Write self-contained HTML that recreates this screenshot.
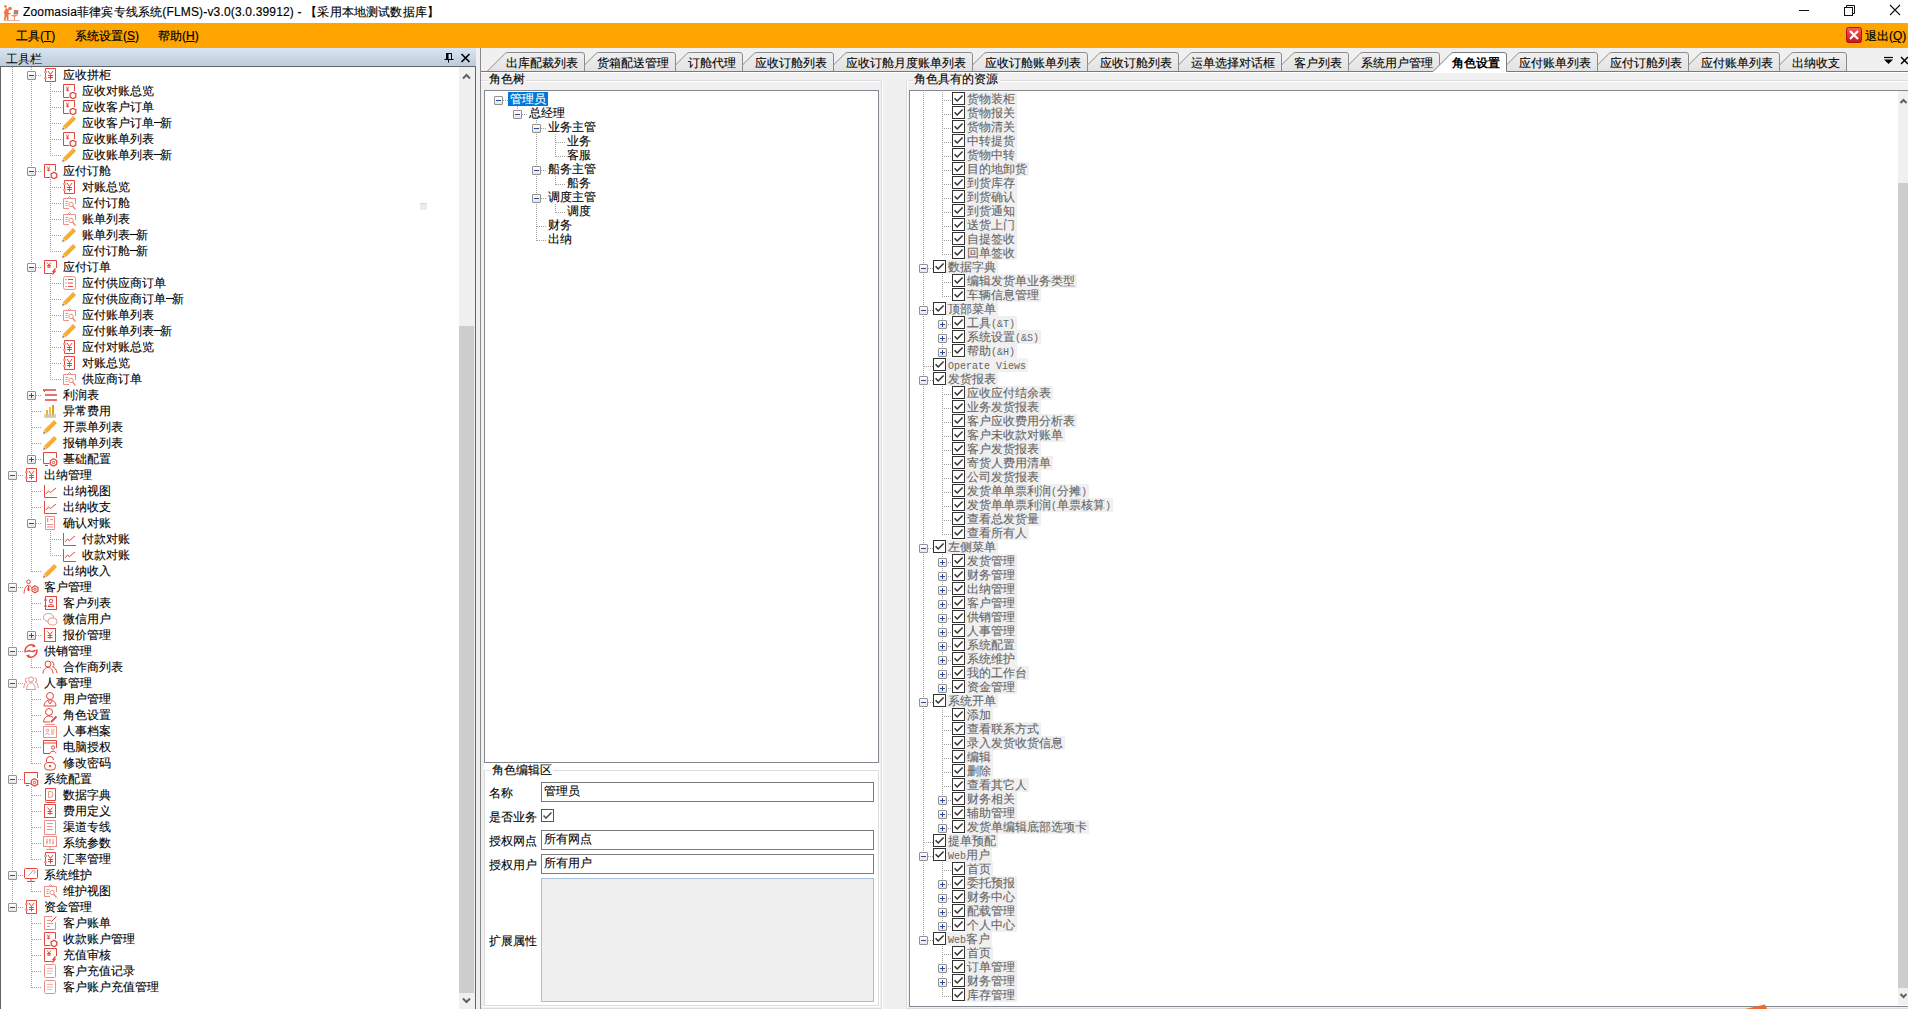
<!DOCTYPE html><html><head><meta charset="utf-8"><title>FLMS</title><style>
*{box-sizing:border-box}
body{margin:0;width:1908px;height:1009px;overflow:hidden;position:relative;background:#f0f0f0;font-family:"Liberation Sans",sans-serif;font-size:12px;color:#000}
.a{position:absolute;white-space:nowrap}
.t{position:absolute;white-space:nowrap;line-height:16px;height:16px;-webkit-text-stroke:.1px currentColor}
.vd{position:absolute;width:1px;background:repeating-linear-gradient(to bottom,#a0a0a0 0 1px,transparent 1px 2px)}
.hd{position:absolute;height:1px;background:repeating-linear-gradient(to right,#a0a0a0 0 1px,transparent 1px 2px)}
.bx{position:absolute;width:9px;height:9px;border:1px solid #919191;border-radius:1px;background:linear-gradient(#fff,#e6e6e6)}
.bx:before{content:"";position:absolute;left:1px;top:3px;width:5px;height:1px;background:#2d4a9a}
.bx.p:after{content:"";position:absolute;left:3px;top:1px;width:1px;height:5px;background:#2d4a9a}
.cb{position:absolute;width:13px;height:13px;border:1px solid #333;background:#fff}
.rt{position:absolute;white-space:nowrap;line-height:14px;height:14px;color:#666;background:#f0f0f0;padding:0 2px;-webkit-text-stroke:.1px currentColor}
.m{font-family:"Liberation Mono",monospace;font-size:10px;-webkit-text-stroke:0}
.dash{display:inline-block;width:6px;height:1px;background:#000;vertical-align:middle;position:relative;top:-1px;box-shadow:2px 0 0 #000}
svg{position:absolute;overflow:visible}
</style></head><body><svg width="0" height="0" style="position:absolute"><defs><symbol id="i-yen" viewBox="0 0 16 16"><path d="M3.5 1.5 H13.5 V14.5 H3.5" fill="none" stroke="#e2463c"/><path d="M3.5 1.5 V4 M3.5 6 V10 M3.5 12 V14.5 M2 5 H5 M2 11 H5" stroke="#e2463c"/><path d="M6 4 L8.5 7.5 L11 4 M8.5 7.5 V12.5 M6 8.5 H11 M6 10.5 H11" fill="none" stroke="#e2463c"/></symbol><symbol id="i-yengear" viewBox="0 0 16 16"><path d="M8 14.5 H2.5 V1.5 H13.5 V8" fill="none" stroke="#e2463c"/><path d="M5 3.5 L6.5 5.5 L8 3.5 M6.5 5.5 V8.5 M5 6 H8 M5 7.5 H8" fill="none" stroke="#e2463c" stroke-width=".8"/><path d="M12 9.3 L14.8 10.9 V14.1 L12 15.7 L9.2 14.1 V10.9 Z" fill="none" stroke="#e2463c" stroke-width="1.3"/></symbol><symbol id="i-pencil" viewBox="0 0 16 16"><defs><linearGradient id="pg" x1="0" y1="0" x2="1" y2="1"><stop offset="0" stop-color="#ffd25a"/><stop offset="1" stop-color="#f08a00"/></linearGradient></defs><path d="M12 1.5 L14.5 4 L5 13.5 L1.5 14.5 L2.5 11 Z" fill="url(#pg)" stroke="#e48c10" stroke-width=".6"/><path d="M1.5 14.5 L2.5 11 L5 13.5 Z" fill="#f0c8a0"/><path d="M1.5 14.5 L2 13 L3 14 Z" fill="#444"/></symbol><symbol id="i-search" viewBox="0 0 16 16"><g fill="none" stroke="#eb8f88"><path d="M2.5 3.5 H14.5 V9 M2.5 3.5 V13.5 H8"/><path d="M6.5 3.5 L8.5 1.5 L10.5 3.5"/><path d="M4.5 6.5 H7.5 M4.5 8.5 H6.5 M4.5 10.5 H6.5"/><circle cx="10" cy="9.5" r="2.2"/><path d="M11.5 11 L14.5 14.5" stroke-width="1.5"/></g></symbol><symbol id="i-chart" viewBox="0 0 16 16"><g fill="none" stroke="#e2463c"><path d="M2.5 2 V14.5 H15"/><path d="M4 11 L6.5 8 L8.5 9.5 L14 5"/></g></symbol><symbol id="i-list" viewBox="0 0 16 16"><g fill="none" stroke="#eb8f88"><rect x="2.5" y="1.5" width="12" height="13" rx="2"/><path d="M7 4.5 H12 M7 8 H12 M7 11.5 H12 M4.5 4.5 H5.5 M4.5 8 H5.5 M4.5 11.5 H5.5" stroke="#e2463c"/></g></symbol><symbol id="i-bars" viewBox="0 0 16 16"><g><rect x="4" y="7" width="2" height="7" fill="#f0b020"/><rect x="7" y="4" width="2" height="10" fill="#f7c23a"/><rect x="10" y="2" width="2" height="12" fill="#e8a010"/><rect x="2" y="11" width="12" height="4" fill="#c8c8b8" opacity=".8"/></g></symbol><symbol id="i-lines" viewBox="0 0 16 16"><g stroke="#e2463c" stroke-width="1.6"><path d="M1 3 H14 M3 8 H15 M3 13 H15"/><path d="M1 3 L3 5" stroke-width="1"/></g></symbol><symbol id="i-mongear" viewBox="0 0 16 16"><g fill="none" stroke="#e2463c"><path d="M7.5 12.5 H1.5 V1.5 H14.5 V7"/><path d="M3 14.5 H6"/><path d="M11.5 7.8 L14.7 9.6 V13.3 L11.5 15.1 L8.3 13.3 V9.6 Z" stroke-width="1.2"/><circle cx="11.5" cy="11.5" r="1.2"/></g></symbol><symbol id="i-docs" viewBox="0 0 16 16"><g fill="none" stroke="#eb8f88"><path d="M3.5 1.5 H12.5 V14.5 H3.5 Z"/><path d="M5.5 3 V7 M5 4 H6.5 M5 6 H6.5 M8 4.5 H11 M5 9.5 H11 M5 12 H11"/></g></symbol><symbol id="i-usergear" viewBox="0 0 16 16"><g fill="none" stroke="#e2463c"><circle cx="5.5" cy="2.8" r="1.8"/><path d="M1 14.5 C1.5 8.5 3.5 6.5 5.5 6.5 C7 6.5 8 7.5 8.5 8.5"/><path d="M5.5 7 L4.8 11 L5.5 12 L6.2 11 Z" fill="#e2463c"/><path d="M12 6.8 L15 8.5 V12 L12 13.7 L9 12 V8.5 Z" stroke-width="1.2"/><circle cx="12" cy="10.2" r="1.2"/></g></symbol><symbol id="i-contact" viewBox="0 0 16 16"><g fill="none" stroke="#e2463c"><rect x="3.5" y="1.5" width="11" height="13"/><path d="M2 5 H5 M2 11 H5"/><circle cx="9" cy="6" r="1.8"/><path d="M6 11.5 C6.5 9 11.5 9 12 11.5 Z"/></g></symbol><symbol id="i-wechat" viewBox="0 0 16 16"><g fill="none" stroke="#eb8f88"><ellipse cx="6.5" cy="6.5" rx="5" ry="4"/><ellipse cx="10.5" cy="10.5" rx="4.5" ry="3.5" fill="#fff"/></g></symbol><symbol id="i-yenbox" viewBox="0 0 16 16"><g fill="none" stroke="#e2463c"><rect x="2.5" y="1.5" width="11" height="13"/><path d="M5.5 4.5 L8 7.5 L10.5 4.5 M8 7.5 V12 M5.5 8.5 H10.5 M5.5 10.5 H10.5"/></g></symbol><symbol id="i-cycle" viewBox="0 0 16 16"><g fill="none" stroke="#e2463c" stroke-width="1.5"><path d="M2.3 9.5 A6 6 0 0 1 11 2.7"/><path d="M13.7 6.5 A6 6 0 0 1 5 13.3"/><path d="M3.5 9 C5.5 5.5 9.5 11 12.5 7"/></g><path d="M10 1 L13 3.5 L9.5 4.5 Z M6 15 L3 12.5 L6.5 11.5 Z" fill="#e2463c"/></symbol><symbol id="i-users" viewBox="0 0 16 16"><g fill="none" stroke="#e2463c"><circle cx="6" cy="5" r="3"/><path d="M1 14.5 C1.5 10 3.5 8.5 6 8.5 C8.5 8.5 10.5 10 11 14.5"/><path d="M9.5 2.5 A3 3 0 0 1 10.5 8 C13 8.5 14.5 10.5 15 14"/></g></symbol><symbol id="i-users3" viewBox="0 0 16 16"><g fill="none" stroke="#eb8f88"><circle cx="8" cy="4.5" r="2.5"/><path d="M3.5 14.5 C4 9.5 6 8 8 8 C10 8 12 9.5 12.5 14.5 Z"/><path d="M4.5 3 A2 2 0 0 0 4 7 C2 7.5 1 9.5 .8 13 M11.5 3 A2 2 0 0 1 12 7 C14 7.5 15 9.5 15.2 13"/></g></symbol><symbol id="i-user" viewBox="0 0 16 16"><g fill="none" stroke="#e2463c"><circle cx="8" cy="5" r="3.5"/><path d="M2 15 C2.5 10.5 5 9 8 9 C11 9 13.5 10.5 14 15 Z"/><path d="M6 10 L8 13 L10 10"/></g></symbol><symbol id="i-useredit" viewBox="0 0 16 16"><g fill="none" stroke="#e2463c"><circle cx="7" cy="5" r="3.5"/><path d="M1.5 15 C2 10.5 4.5 9 7 9 C8.5 9 10 9.5 11 10.5 M1.5 15 H8"/><path d="M9 15 L14.5 9.5" stroke-width="1.8"/></g></symbol><symbol id="i-idcard" viewBox="0 0 16 16"><g fill="none" stroke="#eb8f88"><rect x="1.5" y="3.5" width="13" height="11"/><path d="M3 1.5 H13"/><circle cx="5.5" cy="7.5" r="1.3"/><path d="M3.5 12 C4 10 7 10 7.5 12 M9 7 H12.5 M9 9 H12.5 M9 11 H12"/></g></symbol><symbol id="i-pcuser" viewBox="0 0 16 16"><g fill="none" stroke="#e2463c"><path d="M8 14.5 H1.5 V1.5 H14.5 V9 M1.5 4 H14.5"/><circle cx="11" cy="8.5" r="1.6"/><path d="M8 14.5 C8.5 11.5 13.5 11.5 14 14.5"/></g></symbol><symbol id="i-lock" viewBox="0 0 16 16"><g fill="none" stroke="#e2463c"><path d="M4.5 7 V5 A3.5 3.5 0 0 1 11.5 5"/><rect x="2.5" y="7.5" width="11" height="7.5" rx="3.5"/><circle cx="8" cy="11" r=".8" fill="#e2463c"/></g></symbol><symbol id="i-docD" viewBox="0 0 16 16"><g fill="none" stroke="#e2463c"><path d="M3.5 13.5 V1.5 H13.5 V13.5 H4.5 A1 1 0 0 0 4.5 15.5 H13.5"/><path d="M6.5 4.5 H8.5 A2.5 3 0 0 1 8.5 10.5 H6.5 Z" stroke="#eb8f88"/></g></symbol><symbol id="i-doclines" viewBox="0 0 16 16"><g fill="none" stroke="#eb8f88"><path d="M2.5 1.5 H13.5 V15.5 H2.5 Z"/><path d="M5 4.5 H11 M5 7.5 H10 M5 10.5 H11"/></g></symbol><symbol id="i-monparam" viewBox="0 0 16 16"><g fill="none" stroke="#eb8f88"><rect x="1.5" y="1.5" width="13" height="10"/><path d="M8 11.5 V14 M4 14.5 H12 M5 4 V9 M8 4 V9 M11 4 V9 M4 7 H6 M7 5 H9 M10 8 H12"/></g></symbol><symbol id="i-monwrench" viewBox="0 0 16 16"><g fill="none" stroke="#e2463c"><rect x="1.5" y="1.5" width="13" height="10" rx="1"/><path d="M4 14.5 H12 M8 11.5 V14"/><path d="M5 9 L9 5 A1.5 1.5 0 1 1 10.5 6.5" stroke="#eb8f88"/></g></symbol><symbol id="i-docedit" viewBox="0 0 16 16"><g fill="none" stroke="#eb8f88"><path d="M13.5 7 V14.5 H2.5 V1.5 H10"/><path d="M5 5.5 H9 M5 8.5 H11 M5 11.5 H8"/><path d="M9 7 L14.5 1.5" stroke="#e2463c"/></g></symbol><symbol id="i-docfill" viewBox="0 0 16 16"><g><rect x="2.5" y="1.5" width="11" height="13" rx="1" fill="none" stroke="#eb8f88"/><path d="M5 5.5 H11 M5 8 H11 M5 10.5 H10" stroke="#e9b5b0"/></g></symbol><symbol id="i-yenbolt" viewBox="0 0 16 16"><g fill="none" stroke="#e2463c"><path d="M10 14.5 H2.5 V1.5 H14.5 V9"/><path d="M5 3.5 L7 6 L9 3.5 M7 6 V9 M5 6.5 H9 M5 8 H9" stroke-width=".9"/><path d="M13.5 9.5 L11 12.5 H13 L10.5 15.5" stroke-width="1.3"/></g></symbol><symbol id="i-chk" viewBox="0 0 13 13"><path d="M2.6 6.2 L5.2 9 L10.6 3.4" fill="none" stroke="#333" stroke-width="1.5"/></symbol></defs></svg><div class="a" style="left:0;top:0;width:1908px;height:23px;background:#fff"></div><svg style="left:2px;top:3px" width="17" height="17" viewBox="0 0 17 17">
<g fill="#ec7446">
<circle cx="3.5" cy="3.5" r="1.3"/><circle cx="8" cy="5.5" r="1.8"/>
<path d="M4 5 L7 6.5 L6.5 10 L9 10.5 L9 11.2 L6.5 11.2 L6.5 17 L5 17 L4.5 13 L3.5 17 L2 17 L2.5 12 L2 9 Z"/>
<path d="M8.5 12 H16 L13 14 V17.5 H12 V14 Z" opacity=".8"/>
<rect x="1.5" y="17" width="16" height="1" opacity=".6"/>
<path d="M12 7 H16.5 L16 11.5 H11.5 Z"/>
</g><path d="M12.4 8 H15.8 L15.4 11 H12 Z" fill="#4aa3df"/></svg><div class="a" style="left:23px;top:4px;line-height:16px;font-size:12px;letter-spacing:.17px;-webkit-text-stroke:.15px #000">Zoomasia菲律宾专线系统(FLMS)-v3.0(3.0.39912) - 【采用本地测试数据库】</div><svg style="left:1790px;top:0" width="118" height="22" viewBox="0 0 118 22">
<path d="M9 10.5 H19" stroke="#111" stroke-width="1"/>
<rect x="54.5" y="7.5" width="8" height="8" fill="none" stroke="#111"/>
<path d="M56.5 7.5 V5.5 H64.5 V13.5 H62.5" fill="none" stroke="#111"/>
<path d="M100 5 L110 15 M110 5 L100 15" stroke="#111" stroke-width="1.1"/></svg><div class="a" style="left:0;top:23px;width:1908px;height:25px;background:#ffa500"></div><div class="a" style="left:16px;top:28px;line-height:16px;font-size:12px;-webkit-text-stroke:.2px #000">工具(<u>T</u>)</div><div class="a" style="left:75px;top:28px;line-height:16px;font-size:12px;-webkit-text-stroke:.2px #000">系统设置(<u>S</u>)</div><div class="a" style="left:158px;top:28px;line-height:16px;font-size:12px;-webkit-text-stroke:.2px #000">帮助(<u>H</u>)</div><svg style="left:1846px;top:27px" width="16" height="16" viewBox="0 0 16 16">
<defs><linearGradient id="rg" x1="0" y1="0" x2="0" y2="1"><stop offset="0" stop-color="#f36060"/><stop offset="1" stop-color="#c81414"/></linearGradient></defs>
<rect x="0.5" y="0.5" width="15" height="15" rx="2" fill="url(#rg)" stroke="#b01010"/>
<path d="M4 4 L12 12 M12 4 L4 12" stroke="#fff" stroke-width="2.2"/></svg><div class="a" style="left:1865px;top:28px;line-height:16px;font-size:12px;-webkit-text-stroke:.2px #000">退出(<u>Q</u>)</div><div class="a" style="left:0;top:48px;width:476px;height:18px;background:linear-gradient(#d9e5f2,#bccadb)"></div><div class="a" style="left:6px;top:51px;line-height:16px">工具栏</div><svg style="left:440px;top:48px" width="36" height="18" viewBox="0 0 36 18">
<path d="M6.5 5.5 H11.5 V11.5 M4.5 11.5 H13.5 M8.5 11.5 V14.5" stroke="#000" stroke-width="1" fill="none"/>
<rect x="6" y="5" width="2.5" height="6.5" fill="#000"/>
<path d="M21.5 6 L29.5 14 M29.5 6 L21.5 14" stroke="#000" stroke-width="1.6"/></svg><div class="a" style="left:0;top:66px;width:476px;height:943px;background:#fff;border-left:1px solid #646464;border-top:1px solid #646464;border-right:1px solid #646464"></div><div class="a" style="left:1px;top:67px;width:458px;height:942px;overflow:hidden"><div class="a" style="left:-1px;top:-67px;width:476px;height:1009px"><div class="vd" style="left:12px;top:67px;height:16px"></div><div class="vd" style="left:31px;top:67px;height:16px"></div><div class="hd" style="left:32px;top:75px;width:10px"></div><div class="bx" style="left:27px;top:71px"></div><div class="vd" style="left:12px;top:83px;height:16px"></div><div class="vd" style="left:31px;top:83px;height:16px"></div><div class="vd" style="left:50px;top:83px;height:16px"></div><div class="hd" style="left:52px;top:91px;width:9px"></div><div class="vd" style="left:12px;top:99px;height:16px"></div><div class="vd" style="left:31px;top:99px;height:16px"></div><div class="vd" style="left:50px;top:99px;height:16px"></div><div class="hd" style="left:52px;top:107px;width:9px"></div><div class="vd" style="left:12px;top:115px;height:16px"></div><div class="vd" style="left:31px;top:115px;height:16px"></div><div class="vd" style="left:50px;top:115px;height:16px"></div><div class="hd" style="left:52px;top:123px;width:9px"></div><div class="vd" style="left:12px;top:131px;height:16px"></div><div class="vd" style="left:31px;top:131px;height:16px"></div><div class="vd" style="left:50px;top:131px;height:16px"></div><div class="hd" style="left:52px;top:139px;width:9px"></div><div class="vd" style="left:12px;top:147px;height:16px"></div><div class="vd" style="left:31px;top:147px;height:16px"></div><div class="vd" style="left:50px;top:147px;height:9px"></div><div class="hd" style="left:52px;top:155px;width:9px"></div><div class="vd" style="left:12px;top:163px;height:16px"></div><div class="vd" style="left:31px;top:163px;height:16px"></div><div class="hd" style="left:32px;top:171px;width:10px"></div><div class="bx" style="left:27px;top:167px"></div><div class="vd" style="left:12px;top:179px;height:16px"></div><div class="vd" style="left:31px;top:179px;height:16px"></div><div class="vd" style="left:50px;top:179px;height:16px"></div><div class="hd" style="left:52px;top:187px;width:9px"></div><div class="vd" style="left:12px;top:195px;height:16px"></div><div class="vd" style="left:31px;top:195px;height:16px"></div><div class="vd" style="left:50px;top:195px;height:16px"></div><div class="hd" style="left:52px;top:203px;width:9px"></div><div class="vd" style="left:12px;top:211px;height:16px"></div><div class="vd" style="left:31px;top:211px;height:16px"></div><div class="vd" style="left:50px;top:211px;height:16px"></div><div class="hd" style="left:52px;top:219px;width:9px"></div><div class="vd" style="left:12px;top:227px;height:16px"></div><div class="vd" style="left:31px;top:227px;height:16px"></div><div class="vd" style="left:50px;top:227px;height:16px"></div><div class="hd" style="left:52px;top:235px;width:9px"></div><div class="vd" style="left:12px;top:243px;height:16px"></div><div class="vd" style="left:31px;top:243px;height:16px"></div><div class="vd" style="left:50px;top:243px;height:9px"></div><div class="hd" style="left:52px;top:251px;width:9px"></div><div class="vd" style="left:12px;top:259px;height:16px"></div><div class="vd" style="left:31px;top:259px;height:16px"></div><div class="hd" style="left:32px;top:267px;width:10px"></div><div class="bx" style="left:27px;top:263px"></div><div class="vd" style="left:12px;top:275px;height:16px"></div><div class="vd" style="left:31px;top:275px;height:16px"></div><div class="vd" style="left:50px;top:275px;height:16px"></div><div class="hd" style="left:52px;top:283px;width:9px"></div><div class="vd" style="left:12px;top:291px;height:16px"></div><div class="vd" style="left:31px;top:291px;height:16px"></div><div class="vd" style="left:50px;top:291px;height:16px"></div><div class="hd" style="left:52px;top:299px;width:9px"></div><div class="vd" style="left:12px;top:307px;height:16px"></div><div class="vd" style="left:31px;top:307px;height:16px"></div><div class="vd" style="left:50px;top:307px;height:16px"></div><div class="hd" style="left:52px;top:315px;width:9px"></div><div class="vd" style="left:12px;top:323px;height:16px"></div><div class="vd" style="left:31px;top:323px;height:16px"></div><div class="vd" style="left:50px;top:323px;height:16px"></div><div class="hd" style="left:52px;top:331px;width:9px"></div><div class="vd" style="left:12px;top:339px;height:16px"></div><div class="vd" style="left:31px;top:339px;height:16px"></div><div class="vd" style="left:50px;top:339px;height:16px"></div><div class="hd" style="left:52px;top:347px;width:9px"></div><div class="vd" style="left:12px;top:355px;height:16px"></div><div class="vd" style="left:31px;top:355px;height:16px"></div><div class="vd" style="left:50px;top:355px;height:16px"></div><div class="hd" style="left:52px;top:363px;width:9px"></div><div class="vd" style="left:12px;top:371px;height:16px"></div><div class="vd" style="left:31px;top:371px;height:16px"></div><div class="vd" style="left:50px;top:371px;height:9px"></div><div class="hd" style="left:52px;top:379px;width:9px"></div><div class="vd" style="left:12px;top:387px;height:16px"></div><div class="vd" style="left:31px;top:387px;height:16px"></div><div class="hd" style="left:32px;top:395px;width:10px"></div><div class="bx p" style="left:27px;top:391px"></div><div class="vd" style="left:12px;top:403px;height:16px"></div><div class="vd" style="left:31px;top:403px;height:16px"></div><div class="hd" style="left:32px;top:411px;width:10px"></div><div class="vd" style="left:12px;top:419px;height:16px"></div><div class="vd" style="left:31px;top:419px;height:16px"></div><div class="hd" style="left:32px;top:427px;width:10px"></div><div class="vd" style="left:12px;top:435px;height:16px"></div><div class="vd" style="left:31px;top:435px;height:16px"></div><div class="hd" style="left:32px;top:443px;width:10px"></div><div class="vd" style="left:12px;top:451px;height:16px"></div><div class="vd" style="left:31px;top:451px;height:9px"></div><div class="hd" style="left:32px;top:459px;width:10px"></div><div class="bx p" style="left:27px;top:455px"></div><div class="vd" style="left:12px;top:467px;height:16px"></div><div class="hd" style="left:14px;top:475px;width:9px"></div><div class="bx" style="left:8px;top:471px"></div><div class="vd" style="left:12px;top:483px;height:16px"></div><div class="vd" style="left:31px;top:483px;height:16px"></div><div class="hd" style="left:32px;top:491px;width:10px"></div><div class="vd" style="left:12px;top:499px;height:16px"></div><div class="vd" style="left:31px;top:499px;height:16px"></div><div class="hd" style="left:32px;top:507px;width:10px"></div><div class="vd" style="left:12px;top:515px;height:16px"></div><div class="vd" style="left:31px;top:515px;height:16px"></div><div class="hd" style="left:32px;top:523px;width:10px"></div><div class="bx" style="left:27px;top:519px"></div><div class="vd" style="left:12px;top:531px;height:16px"></div><div class="vd" style="left:31px;top:531px;height:16px"></div><div class="vd" style="left:50px;top:531px;height:16px"></div><div class="hd" style="left:52px;top:539px;width:9px"></div><div class="vd" style="left:12px;top:547px;height:16px"></div><div class="vd" style="left:31px;top:547px;height:16px"></div><div class="vd" style="left:50px;top:547px;height:9px"></div><div class="hd" style="left:52px;top:555px;width:9px"></div><div class="vd" style="left:12px;top:563px;height:16px"></div><div class="vd" style="left:31px;top:563px;height:9px"></div><div class="hd" style="left:32px;top:571px;width:10px"></div><div class="vd" style="left:12px;top:579px;height:16px"></div><div class="hd" style="left:14px;top:587px;width:9px"></div><div class="bx" style="left:8px;top:583px"></div><div class="vd" style="left:12px;top:595px;height:16px"></div><div class="vd" style="left:31px;top:595px;height:16px"></div><div class="hd" style="left:32px;top:603px;width:10px"></div><div class="vd" style="left:12px;top:611px;height:16px"></div><div class="vd" style="left:31px;top:611px;height:16px"></div><div class="hd" style="left:32px;top:619px;width:10px"></div><div class="vd" style="left:12px;top:627px;height:16px"></div><div class="vd" style="left:31px;top:627px;height:9px"></div><div class="hd" style="left:32px;top:635px;width:10px"></div><div class="bx p" style="left:27px;top:631px"></div><div class="vd" style="left:12px;top:643px;height:16px"></div><div class="hd" style="left:14px;top:651px;width:9px"></div><div class="bx" style="left:8px;top:647px"></div><div class="vd" style="left:12px;top:659px;height:16px"></div><div class="vd" style="left:31px;top:659px;height:9px"></div><div class="hd" style="left:32px;top:667px;width:10px"></div><div class="vd" style="left:12px;top:675px;height:16px"></div><div class="hd" style="left:14px;top:683px;width:9px"></div><div class="bx" style="left:8px;top:679px"></div><div class="vd" style="left:12px;top:691px;height:16px"></div><div class="vd" style="left:31px;top:691px;height:16px"></div><div class="hd" style="left:32px;top:699px;width:10px"></div><div class="vd" style="left:12px;top:707px;height:16px"></div><div class="vd" style="left:31px;top:707px;height:16px"></div><div class="hd" style="left:32px;top:715px;width:10px"></div><div class="vd" style="left:12px;top:723px;height:16px"></div><div class="vd" style="left:31px;top:723px;height:16px"></div><div class="hd" style="left:32px;top:731px;width:10px"></div><div class="vd" style="left:12px;top:739px;height:16px"></div><div class="vd" style="left:31px;top:739px;height:16px"></div><div class="hd" style="left:32px;top:747px;width:10px"></div><div class="vd" style="left:12px;top:755px;height:16px"></div><div class="vd" style="left:31px;top:755px;height:9px"></div><div class="hd" style="left:32px;top:763px;width:10px"></div><div class="vd" style="left:12px;top:771px;height:16px"></div><div class="hd" style="left:14px;top:779px;width:9px"></div><div class="bx" style="left:8px;top:775px"></div><div class="vd" style="left:12px;top:787px;height:16px"></div><div class="vd" style="left:31px;top:787px;height:16px"></div><div class="hd" style="left:32px;top:795px;width:10px"></div><div class="vd" style="left:12px;top:803px;height:16px"></div><div class="vd" style="left:31px;top:803px;height:16px"></div><div class="hd" style="left:32px;top:811px;width:10px"></div><div class="vd" style="left:12px;top:819px;height:16px"></div><div class="vd" style="left:31px;top:819px;height:16px"></div><div class="hd" style="left:32px;top:827px;width:10px"></div><div class="vd" style="left:12px;top:835px;height:16px"></div><div class="vd" style="left:31px;top:835px;height:16px"></div><div class="hd" style="left:32px;top:843px;width:10px"></div><div class="vd" style="left:12px;top:851px;height:16px"></div><div class="vd" style="left:31px;top:851px;height:9px"></div><div class="hd" style="left:32px;top:859px;width:10px"></div><div class="vd" style="left:12px;top:867px;height:16px"></div><div class="hd" style="left:14px;top:875px;width:9px"></div><div class="bx" style="left:8px;top:871px"></div><div class="vd" style="left:12px;top:883px;height:16px"></div><div class="vd" style="left:31px;top:883px;height:9px"></div><div class="hd" style="left:32px;top:891px;width:10px"></div><div class="vd" style="left:12px;top:899px;height:9px"></div><div class="hd" style="left:14px;top:907px;width:9px"></div><div class="bx" style="left:8px;top:903px"></div><div class="vd" style="left:31px;top:915px;height:16px"></div><div class="hd" style="left:32px;top:923px;width:10px"></div><div class="vd" style="left:31px;top:931px;height:16px"></div><div class="hd" style="left:32px;top:939px;width:10px"></div><div class="vd" style="left:31px;top:947px;height:16px"></div><div class="hd" style="left:32px;top:955px;width:10px"></div><div class="vd" style="left:31px;top:963px;height:16px"></div><div class="hd" style="left:32px;top:971px;width:10px"></div><div class="vd" style="left:31px;top:979px;height:9px"></div><div class="hd" style="left:32px;top:987px;width:10px"></div><svg style="left:42px;top:67px" width="16" height="16"><use href="#i-yen"/></svg><div class="t" style="left:63px;top:67px">应收拼柜</div><svg style="left:61px;top:83px" width="16" height="16"><use href="#i-yengear"/></svg><div class="t" style="left:82px;top:83px">应收对账总览</div><svg style="left:61px;top:99px" width="16" height="16"><use href="#i-yengear"/></svg><div class="t" style="left:82px;top:99px">应收客户订单</div><svg style="left:61px;top:115px" width="16" height="16"><use href="#i-pencil"/></svg><div class="t" style="left:82px;top:115px">应收客户订单<i class="dash"></i>新</div><svg style="left:61px;top:131px" width="16" height="16"><use href="#i-yengear"/></svg><div class="t" style="left:82px;top:131px">应收账单列表</div><svg style="left:61px;top:147px" width="16" height="16"><use href="#i-pencil"/></svg><div class="t" style="left:82px;top:147px">应收账单列表<i class="dash"></i>新</div><svg style="left:42px;top:163px" width="16" height="16"><use href="#i-yengear"/></svg><div class="t" style="left:63px;top:163px">应付订舱</div><svg style="left:61px;top:179px" width="16" height="16"><use href="#i-yen"/></svg><div class="t" style="left:82px;top:179px">对账总览</div><svg style="left:61px;top:195px" width="16" height="16"><use href="#i-search"/></svg><div class="t" style="left:82px;top:195px">应付订舱</div><svg style="left:61px;top:211px" width="16" height="16"><use href="#i-search"/></svg><div class="t" style="left:82px;top:211px">账单列表</div><svg style="left:61px;top:227px" width="16" height="16"><use href="#i-pencil"/></svg><div class="t" style="left:82px;top:227px">账单列表<i class="dash"></i>新</div><svg style="left:61px;top:243px" width="16" height="16"><use href="#i-pencil"/></svg><div class="t" style="left:82px;top:243px">应付订舱<i class="dash"></i>新</div><svg style="left:42px;top:259px" width="16" height="16"><use href="#i-yenbolt"/></svg><div class="t" style="left:63px;top:259px">应付订单</div><svg style="left:61px;top:275px" width="16" height="16"><use href="#i-list"/></svg><div class="t" style="left:82px;top:275px">应付供应商订单</div><svg style="left:61px;top:291px" width="16" height="16"><use href="#i-pencil"/></svg><div class="t" style="left:82px;top:291px">应付供应商订单<i class="dash"></i>新</div><svg style="left:61px;top:307px" width="16" height="16"><use href="#i-search"/></svg><div class="t" style="left:82px;top:307px">应付账单列表</div><svg style="left:61px;top:323px" width="16" height="16"><use href="#i-pencil"/></svg><div class="t" style="left:82px;top:323px">应付账单列表<i class="dash"></i>新</div><svg style="left:61px;top:339px" width="16" height="16"><use href="#i-yen"/></svg><div class="t" style="left:82px;top:339px">应付对账总览</div><svg style="left:61px;top:355px" width="16" height="16"><use href="#i-yen"/></svg><div class="t" style="left:82px;top:355px">对账总览</div><svg style="left:61px;top:371px" width="16" height="16"><use href="#i-search"/></svg><div class="t" style="left:82px;top:371px">供应商订单</div><svg style="left:42px;top:387px" width="16" height="16"><use href="#i-lines"/></svg><div class="t" style="left:63px;top:387px">利润表</div><svg style="left:42px;top:403px" width="16" height="16"><use href="#i-bars"/></svg><div class="t" style="left:63px;top:403px">异常费用</div><svg style="left:42px;top:419px" width="16" height="16"><use href="#i-pencil"/></svg><div class="t" style="left:63px;top:419px">开票单列表</div><svg style="left:42px;top:435px" width="16" height="16"><use href="#i-pencil"/></svg><div class="t" style="left:63px;top:435px">报销单列表</div><svg style="left:42px;top:451px" width="16" height="16"><use href="#i-mongear"/></svg><div class="t" style="left:63px;top:451px">基础配置</div><svg style="left:23px;top:467px" width="16" height="16"><use href="#i-yen"/></svg><div class="t" style="left:44px;top:467px">出纳管理</div><svg style="left:42px;top:483px" width="16" height="16"><use href="#i-chart"/></svg><div class="t" style="left:63px;top:483px">出纳视图</div><svg style="left:42px;top:499px" width="16" height="16"><use href="#i-chart"/></svg><div class="t" style="left:63px;top:499px">出纳收支</div><svg style="left:42px;top:515px" width="16" height="16"><use href="#i-docs"/></svg><div class="t" style="left:63px;top:515px">确认对账</div><svg style="left:61px;top:531px" width="16" height="16"><use href="#i-chart"/></svg><div class="t" style="left:82px;top:531px">付款对账</div><svg style="left:61px;top:547px" width="16" height="16"><use href="#i-chart"/></svg><div class="t" style="left:82px;top:547px">收款对账</div><svg style="left:42px;top:563px" width="16" height="16"><use href="#i-pencil"/></svg><div class="t" style="left:63px;top:563px">出纳收入</div><svg style="left:23px;top:579px" width="16" height="16"><use href="#i-usergear"/></svg><div class="t" style="left:44px;top:579px">客户管理</div><svg style="left:42px;top:595px" width="16" height="16"><use href="#i-contact"/></svg><div class="t" style="left:63px;top:595px">客户列表</div><svg style="left:42px;top:611px" width="16" height="16"><use href="#i-wechat"/></svg><div class="t" style="left:63px;top:611px">微信用户</div><svg style="left:42px;top:627px" width="16" height="16"><use href="#i-yenbox"/></svg><div class="t" style="left:63px;top:627px">报价管理</div><svg style="left:23px;top:643px" width="16" height="16"><use href="#i-cycle"/></svg><div class="t" style="left:44px;top:643px">供销管理</div><svg style="left:42px;top:659px" width="16" height="16"><use href="#i-users"/></svg><div class="t" style="left:63px;top:659px">合作商列表</div><svg style="left:23px;top:675px" width="16" height="16"><use href="#i-users3"/></svg><div class="t" style="left:44px;top:675px">人事管理</div><svg style="left:42px;top:691px" width="16" height="16"><use href="#i-user"/></svg><div class="t" style="left:63px;top:691px">用户管理</div><svg style="left:42px;top:707px" width="16" height="16"><use href="#i-useredit"/></svg><div class="t" style="left:63px;top:707px">角色设置</div><svg style="left:42px;top:723px" width="16" height="16"><use href="#i-idcard"/></svg><div class="t" style="left:63px;top:723px">人事档案</div><svg style="left:42px;top:739px" width="16" height="16"><use href="#i-pcuser"/></svg><div class="t" style="left:63px;top:739px">电脑授权</div><svg style="left:42px;top:755px" width="16" height="16"><use href="#i-lock"/></svg><div class="t" style="left:63px;top:755px">修改密码</div><svg style="left:23px;top:771px" width="16" height="16"><use href="#i-mongear"/></svg><div class="t" style="left:44px;top:771px">系统配置</div><svg style="left:42px;top:787px" width="16" height="16"><use href="#i-docD"/></svg><div class="t" style="left:63px;top:787px">数据字典</div><svg style="left:42px;top:803px" width="16" height="16"><use href="#i-yenbox"/></svg><div class="t" style="left:63px;top:803px">费用定义</div><svg style="left:42px;top:819px" width="16" height="16"><use href="#i-doclines"/></svg><div class="t" style="left:63px;top:819px">渠道专线</div><svg style="left:42px;top:835px" width="16" height="16"><use href="#i-monparam"/></svg><div class="t" style="left:63px;top:835px">系统参数</div><svg style="left:42px;top:851px" width="16" height="16"><use href="#i-yen"/></svg><div class="t" style="left:63px;top:851px">汇率管理</div><svg style="left:23px;top:867px" width="16" height="16"><use href="#i-monwrench"/></svg><div class="t" style="left:44px;top:867px">系统维护</div><svg style="left:42px;top:883px" width="16" height="16"><use href="#i-search"/></svg><div class="t" style="left:63px;top:883px">维护视图</div><svg style="left:23px;top:899px" width="16" height="16"><use href="#i-yen"/></svg><div class="t" style="left:44px;top:899px">资金管理</div><svg style="left:42px;top:915px" width="16" height="16"><use href="#i-docedit"/></svg><div class="t" style="left:63px;top:915px">客户账单</div><svg style="left:42px;top:931px" width="16" height="16"><use href="#i-yengear"/></svg><div class="t" style="left:63px;top:931px">收款账户管理</div><svg style="left:42px;top:947px" width="16" height="16"><use href="#i-yenbolt"/></svg><div class="t" style="left:63px;top:947px">充值审核</div><svg style="left:42px;top:963px" width="16" height="16"><use href="#i-docfill"/></svg><div class="t" style="left:63px;top:963px">客户充值记录</div><svg style="left:42px;top:979px" width="16" height="16"><use href="#i-docfill"/></svg><div class="t" style="left:63px;top:979px">客户账户充值管理</div></div></div><div class="a" style="left:420px;top:203px;width:7px;height:7px;background:#ececec;border-top:1px solid #d8d8d8"></div><div class="a" style="left:459px;top:67px;width:16px;height:942px;background:#f0f0f0"></div><div class="a" style="left:459px;top:326px;width:15px;height:667px;background:#cdcdcd"></div><svg style="left:459px;top:67px" width="16" height="942"><path d="M4 11.5 L7.5 8 L11 11.5" fill="none" stroke="#606060" stroke-width="2"/><path d="M4 931.5 L7.5 935 L11 931.5" fill="none" stroke="#606060" stroke-width="2"/></svg><div class="a" style="left:480px;top:48px;width:1px;height:961px;background:#8a8a8a"></div><div class="a" style="left:481px;top:48px;width:1427px;height:24px;background:#f0f0f0"></div><svg style="left:480px;top:48px" width="1428" height="25" viewBox="480 48 1428 25"><defs><linearGradient id="tg" x1="0" y1="0" x2="0" y2="1"><stop offset="0" stop-color="#efefef"/><stop offset="1" stop-color="#e2e2e2"/></linearGradient></defs><path d="M1773 71.5 L1791 53.5 Q1792 52.5 1794 52.5 H1844 Q1846.5 52.5 1846.5 55 V71.5" fill="url(#tg)" stroke="#8c8c8c"/><path d="M1682 71.5 L1700 53.5 Q1701 52.5 1703 52.5 H1777 Q1779.5 52.5 1779.5 55 V71.5" fill="url(#tg)" stroke="#8c8c8c"/><path d="M1591 71.5 L1609 53.5 Q1610 52.5 1612 52.5 H1686 Q1688.5 52.5 1688.5 55 V71.5" fill="url(#tg)" stroke="#8c8c8c"/><path d="M1500 71.5 L1518 53.5 Q1519 52.5 1521 52.5 H1595 Q1597.5 52.5 1597.5 55 V71.5" fill="url(#tg)" stroke="#8c8c8c"/><path d="M1342 71.5 L1360 53.5 Q1361 52.5 1363 52.5 H1437 Q1439.5 52.5 1439.5 55 V71.5" fill="url(#tg)" stroke="#8c8c8c"/><path d="M1275 71.5 L1293 53.5 Q1294 52.5 1296 52.5 H1346 Q1348.5 52.5 1348.5 55 V71.5" fill="url(#tg)" stroke="#8c8c8c"/><path d="M1172 71.5 L1190 53.5 Q1191 52.5 1193 52.5 H1279 Q1281.5 52.5 1281.5 55 V71.5" fill="url(#tg)" stroke="#8c8c8c"/><path d="M1081 71.5 L1099 53.5 Q1100 52.5 1102 52.5 H1176 Q1178.5 52.5 1178.5 55 V71.5" fill="url(#tg)" stroke="#8c8c8c"/><path d="M966 71.5 L984 53.5 Q985 52.5 987 52.5 H1085 Q1087.5 52.5 1087.5 55 V71.5" fill="url(#tg)" stroke="#8c8c8c"/><path d="M827 71.5 L845 53.5 Q846 52.5 848 52.5 H970 Q972.5 52.5 972.5 55 V71.5" fill="url(#tg)" stroke="#8c8c8c"/><path d="M736 71.5 L754 53.5 Q755 52.5 757 52.5 H831 Q833.5 52.5 833.5 55 V71.5" fill="url(#tg)" stroke="#8c8c8c"/><path d="M669 71.5 L687 53.5 Q688 52.5 690 52.5 H740 Q742.5 52.5 742.5 55 V71.5" fill="url(#tg)" stroke="#8c8c8c"/><path d="M578 71.5 L596 53.5 Q597 52.5 599 52.5 H673 Q675.5 52.5 675.5 55 V71.5" fill="url(#tg)" stroke="#8c8c8c"/><path d="M487 71.5 L505 53.5 Q506 52.5 508 52.5 H582 Q584.5 52.5 584.5 55 V71.5" fill="url(#tg)" stroke="#8c8c8c"/><path d="M481 71.5 H1908" stroke="#7a7a7a"/><path d="M481 72.5 H1908" stroke="#fff"/><path d="M1433 71.5 L1451 53.5 Q1452 52.5 1454 52.5 H1504 Q1506.5 52.5 1506.5 55 V71.5 V73 H1433 Z" fill="#fff" stroke="none"/><path d="M1433 71.5 L1451 53.5 Q1452 52.5 1454 52.5 H1504 Q1506.5 52.5 1506.5 55 V71.5" fill="none" stroke="#7a7a7a"/><path d="M1884 57.5 H1893" stroke="#000" stroke-width="1.2"/><path d="M1884 59.5 H1893 L1888.5 64 Z" fill="#000"/><path d="M1901 57 L1908 64 M1908 57 L1901 64" stroke="#000" stroke-width="1.5"/></svg><div class="t" style="left:506px;top:55px;">出库配裁列表</div><div class="t" style="left:597px;top:55px;">货箱配送管理</div><div class="t" style="left:688px;top:55px;">订舱代理</div><div class="t" style="left:755px;top:55px;">应收订舱列表</div><div class="t" style="left:846px;top:55px;">应收订舱月度账单列表</div><div class="t" style="left:985px;top:55px;">应收订舱账单列表</div><div class="t" style="left:1100px;top:55px;">应收订舱列表</div><div class="t" style="left:1191px;top:55px;">运单选择对话框</div><div class="t" style="left:1294px;top:55px;">客户列表</div><div class="t" style="left:1361px;top:55px;">系统用户管理</div><div class="t" style="left:1452px;top:55px;font-weight:bold;-webkit-text-stroke:0;">角色设置</div><div class="t" style="left:1519px;top:55px;">应付账单列表</div><div class="t" style="left:1610px;top:55px;">应付订舱列表</div><div class="t" style="left:1701px;top:55px;">应付账单列表</div><div class="t" style="left:1792px;top:55px;">出纳收支</div><div class="a" style="left:481px;top:73px;width:1427px;height:936px;background:#f0f0f0"></div><div class="a" style="left:481px;top:80px;width:7px;height:1px;background:#dcdcdc"></div><div class="a" style="left:481px;top:81px;width:7px;height:1px;background:#fff"></div><div class="a" style="left:526px;top:80px;width:356px;height:1px;background:#dcdcdc"></div><div class="a" style="left:526px;top:81px;width:356px;height:1px;background:#fff"></div><div class="a" style="left:881px;top:80px;width:1px;height:929px;background:#dcdcdc"></div><div class="a" style="left:882px;top:80px;width:1px;height:929px;background:#fff"></div><div class="a" style="left:481px;top:1008px;width:401px;height:1px;background:#dcdcdc"></div><div class="a" style="left:481px;top:1009px;width:401px;height:1px;background:#fff"></div><div class="t" style="left:489px;top:71px">角色树</div><div class="a" style="left:906px;top:80px;width:7px;height:1px;background:#dcdcdc"></div><div class="a" style="left:906px;top:81px;width:7px;height:1px;background:#fff"></div><div class="a" style="left:1000px;top:80px;width:908px;height:1px;background:#dcdcdc"></div><div class="a" style="left:1000px;top:81px;width:908px;height:1px;background:#fff"></div><div class="a" style="left:906px;top:80px;width:1px;height:929px;background:#dcdcdc"></div><div class="a" style="left:907px;top:80px;width:1px;height:929px;background:#fff"></div><div class="a" style="left:906px;top:1008px;width:1002px;height:1px;background:#dcdcdc"></div><div class="a" style="left:906px;top:1009px;width:1002px;height:1px;background:#fff"></div><div class="t" style="left:914px;top:71px">角色具有的资源</div><div class="a" style="left:484px;top:90px;width:395px;height:673px;background:#fff;border:1px solid #828790"></div><div class="hd" style="left:499px;top:100px;width:10px"></div><div class="bx" style="left:494px;top:96px"></div><div class="a" style="left:508px;top:92px;width:40px;height:14px;background:#0078d7"></div><div class="t" style="left:510px;top:91px;color:#fff">管理员</div><div class="vd" style="left:517px;top:106px;height:9px"></div><div class="hd" style="left:518px;top:114px;width:10px"></div><div class="bx" style="left:513px;top:110px"></div><div class="t" style="left:529px;top:105px">总经理</div><div class="vd" style="left:536px;top:120px;height:14px"></div><div class="hd" style="left:537px;top:128px;width:10px"></div><div class="bx" style="left:532px;top:124px"></div><div class="t" style="left:548px;top:119px">业务主管</div><div class="vd" style="left:536px;top:134px;height:14px"></div><div class="vd" style="left:555px;top:134px;height:14px"></div><div class="hd" style="left:556px;top:142px;width:10px"></div><div class="t" style="left:567px;top:133px">业务</div><div class="vd" style="left:536px;top:148px;height:14px"></div><div class="vd" style="left:555px;top:148px;height:9px"></div><div class="hd" style="left:556px;top:156px;width:10px"></div><div class="t" style="left:567px;top:147px">客服</div><div class="vd" style="left:536px;top:162px;height:14px"></div><div class="hd" style="left:537px;top:170px;width:10px"></div><div class="bx" style="left:532px;top:166px"></div><div class="t" style="left:548px;top:161px">船务主管</div><div class="vd" style="left:536px;top:176px;height:14px"></div><div class="vd" style="left:555px;top:176px;height:9px"></div><div class="hd" style="left:556px;top:184px;width:10px"></div><div class="t" style="left:567px;top:175px">船务</div><div class="vd" style="left:536px;top:190px;height:14px"></div><div class="hd" style="left:537px;top:198px;width:10px"></div><div class="bx" style="left:532px;top:194px"></div><div class="t" style="left:548px;top:189px">调度主管</div><div class="vd" style="left:536px;top:204px;height:14px"></div><div class="vd" style="left:555px;top:204px;height:9px"></div><div class="hd" style="left:556px;top:212px;width:10px"></div><div class="t" style="left:567px;top:203px">调度</div><div class="vd" style="left:536px;top:218px;height:14px"></div><div class="hd" style="left:537px;top:226px;width:10px"></div><div class="t" style="left:548px;top:217px">财务</div><div class="vd" style="left:536px;top:232px;height:9px"></div><div class="hd" style="left:537px;top:240px;width:10px"></div><div class="t" style="left:548px;top:231px">出纳</div><div class="a" style="left:484px;top:763px;width:396px;height:244px;background:#fff"></div><div class="a" style="left:484px;top:770px;width:6px;height:1px;background:#dcdcdc"></div><div class="a" style="left:484px;top:771px;width:6px;height:1px;background:#fff"></div><div class="a" style="left:553px;top:770px;width:326px;height:1px;background:#dcdcdc"></div><div class="a" style="left:553px;top:771px;width:326px;height:1px;background:#fff"></div><div class="a" style="left:484px;top:770px;width:1px;height:236px;background:#dcdcdc"></div><div class="a" style="left:485px;top:770px;width:1px;height:236px;background:#fff"></div><div class="a" style="left:878px;top:770px;width:1px;height:236px;background:#dcdcdc"></div><div class="a" style="left:879px;top:770px;width:1px;height:236px;background:#fff"></div><div class="a" style="left:484px;top:1005px;width:395px;height:1px;background:#dcdcdc"></div><div class="a" style="left:484px;top:1006px;width:395px;height:1px;background:#fff"></div><div class="t" style="left:492px;top:762px">角色编辑区</div><div class="t" style="left:489px;top:785px">名称</div><div class="t" style="left:489px;top:809px">是否业务</div><div class="t" style="left:489px;top:833px">授权网点</div><div class="t" style="left:489px;top:857px">授权用户</div><div class="t" style="left:489px;top:933px">扩展属性</div><div class="a" style="left:541px;top:782px;width:333px;height:20px;border:1px solid #7a7a7a;background:#fff"></div><div class="t" style="left:544px;top:783px">管理员</div><div class="a" style="left:541px;top:830px;width:333px;height:20px;border:1px solid #7a7a7a;background:#fff"></div><div class="t" style="left:544px;top:831px">所有网点</div><div class="a" style="left:541px;top:854px;width:333px;height:20px;border:1px solid #7a7a7a;background:#fff"></div><div class="t" style="left:544px;top:855px">所有用户</div><div class="a" style="left:541px;top:809px;width:13px;height:13px;border:1px solid #555;background:#fff"></div><svg style="left:541px;top:809px" width="13" height="13"><path d="M2.5 6.5 L5 9 L10.5 3.5" fill="none" stroke="#555" stroke-width="1.6"/></svg><div class="a" style="left:541px;top:878px;width:333px;height:124px;border:1px solid #a7bfdc;background:#f0f0f0"></div><div class="a" style="left:909px;top:90px;width:999px;height:917px;background:#fff;border-left:1px solid #828790;border-top:1px solid #828790;border-bottom:1px solid #828790"></div><div class="a" style="left:910px;top:91px;width:988px;height:915px;overflow:hidden"><div class="a" style="left:-910px;top:-91px;width:1908px;height:1009px"><div class="vd" style="left:904px;top:92px;height:14px"></div><div class="vd" style="left:923px;top:92px;height:14px"></div><div class="vd" style="left:942px;top:92px;height:14px"></div><div class="hd" style="left:944px;top:100px;width:8px"></div><div class="vd" style="left:904px;top:106px;height:14px"></div><div class="vd" style="left:923px;top:106px;height:14px"></div><div class="vd" style="left:942px;top:106px;height:14px"></div><div class="hd" style="left:944px;top:114px;width:8px"></div><div class="vd" style="left:904px;top:120px;height:14px"></div><div class="vd" style="left:923px;top:120px;height:14px"></div><div class="vd" style="left:942px;top:120px;height:14px"></div><div class="hd" style="left:944px;top:128px;width:8px"></div><div class="vd" style="left:904px;top:134px;height:14px"></div><div class="vd" style="left:923px;top:134px;height:14px"></div><div class="vd" style="left:942px;top:134px;height:14px"></div><div class="hd" style="left:944px;top:142px;width:8px"></div><div class="vd" style="left:904px;top:148px;height:14px"></div><div class="vd" style="left:923px;top:148px;height:14px"></div><div class="vd" style="left:942px;top:148px;height:14px"></div><div class="hd" style="left:944px;top:156px;width:8px"></div><div class="vd" style="left:904px;top:162px;height:14px"></div><div class="vd" style="left:923px;top:162px;height:14px"></div><div class="vd" style="left:942px;top:162px;height:14px"></div><div class="hd" style="left:944px;top:170px;width:8px"></div><div class="vd" style="left:904px;top:176px;height:14px"></div><div class="vd" style="left:923px;top:176px;height:14px"></div><div class="vd" style="left:942px;top:176px;height:14px"></div><div class="hd" style="left:944px;top:184px;width:8px"></div><div class="vd" style="left:904px;top:190px;height:14px"></div><div class="vd" style="left:923px;top:190px;height:14px"></div><div class="vd" style="left:942px;top:190px;height:14px"></div><div class="hd" style="left:944px;top:198px;width:8px"></div><div class="vd" style="left:904px;top:204px;height:14px"></div><div class="vd" style="left:923px;top:204px;height:14px"></div><div class="vd" style="left:942px;top:204px;height:14px"></div><div class="hd" style="left:944px;top:212px;width:8px"></div><div class="vd" style="left:904px;top:218px;height:14px"></div><div class="vd" style="left:923px;top:218px;height:14px"></div><div class="vd" style="left:942px;top:218px;height:14px"></div><div class="hd" style="left:944px;top:226px;width:8px"></div><div class="vd" style="left:904px;top:232px;height:14px"></div><div class="vd" style="left:923px;top:232px;height:14px"></div><div class="vd" style="left:942px;top:232px;height:14px"></div><div class="hd" style="left:944px;top:240px;width:8px"></div><div class="vd" style="left:904px;top:246px;height:14px"></div><div class="vd" style="left:923px;top:246px;height:14px"></div><div class="vd" style="left:942px;top:246px;height:9px"></div><div class="hd" style="left:944px;top:254px;width:8px"></div><div class="vd" style="left:904px;top:260px;height:14px"></div><div class="vd" style="left:923px;top:260px;height:14px"></div><div class="hd" style="left:924px;top:268px;width:9px"></div><div class="bx" style="left:919px;top:264px"></div><div class="vd" style="left:904px;top:274px;height:14px"></div><div class="vd" style="left:923px;top:274px;height:14px"></div><div class="vd" style="left:942px;top:274px;height:14px"></div><div class="hd" style="left:944px;top:282px;width:8px"></div><div class="vd" style="left:904px;top:288px;height:14px"></div><div class="vd" style="left:923px;top:288px;height:14px"></div><div class="vd" style="left:942px;top:288px;height:9px"></div><div class="hd" style="left:944px;top:296px;width:8px"></div><div class="vd" style="left:904px;top:302px;height:14px"></div><div class="vd" style="left:923px;top:302px;height:14px"></div><div class="hd" style="left:924px;top:310px;width:9px"></div><div class="bx" style="left:919px;top:306px"></div><div class="vd" style="left:904px;top:316px;height:14px"></div><div class="vd" style="left:923px;top:316px;height:14px"></div><div class="vd" style="left:942px;top:316px;height:14px"></div><div class="hd" style="left:944px;top:324px;width:8px"></div><div class="bx p" style="left:938px;top:320px"></div><div class="vd" style="left:904px;top:330px;height:14px"></div><div class="vd" style="left:923px;top:330px;height:14px"></div><div class="vd" style="left:942px;top:330px;height:14px"></div><div class="hd" style="left:944px;top:338px;width:8px"></div><div class="bx p" style="left:938px;top:334px"></div><div class="vd" style="left:904px;top:344px;height:14px"></div><div class="vd" style="left:923px;top:344px;height:14px"></div><div class="vd" style="left:942px;top:344px;height:9px"></div><div class="hd" style="left:944px;top:352px;width:8px"></div><div class="bx p" style="left:938px;top:348px"></div><div class="vd" style="left:904px;top:358px;height:14px"></div><div class="vd" style="left:923px;top:358px;height:14px"></div><div class="hd" style="left:924px;top:366px;width:9px"></div><div class="vd" style="left:904px;top:372px;height:14px"></div><div class="vd" style="left:923px;top:372px;height:14px"></div><div class="hd" style="left:924px;top:380px;width:9px"></div><div class="bx" style="left:919px;top:376px"></div><div class="vd" style="left:904px;top:386px;height:14px"></div><div class="vd" style="left:923px;top:386px;height:14px"></div><div class="vd" style="left:942px;top:386px;height:14px"></div><div class="hd" style="left:944px;top:394px;width:8px"></div><div class="vd" style="left:904px;top:400px;height:14px"></div><div class="vd" style="left:923px;top:400px;height:14px"></div><div class="vd" style="left:942px;top:400px;height:14px"></div><div class="hd" style="left:944px;top:408px;width:8px"></div><div class="vd" style="left:904px;top:414px;height:14px"></div><div class="vd" style="left:923px;top:414px;height:14px"></div><div class="vd" style="left:942px;top:414px;height:14px"></div><div class="hd" style="left:944px;top:422px;width:8px"></div><div class="vd" style="left:904px;top:428px;height:14px"></div><div class="vd" style="left:923px;top:428px;height:14px"></div><div class="vd" style="left:942px;top:428px;height:14px"></div><div class="hd" style="left:944px;top:436px;width:8px"></div><div class="vd" style="left:904px;top:442px;height:14px"></div><div class="vd" style="left:923px;top:442px;height:14px"></div><div class="vd" style="left:942px;top:442px;height:14px"></div><div class="hd" style="left:944px;top:450px;width:8px"></div><div class="vd" style="left:904px;top:456px;height:14px"></div><div class="vd" style="left:923px;top:456px;height:14px"></div><div class="vd" style="left:942px;top:456px;height:14px"></div><div class="hd" style="left:944px;top:464px;width:8px"></div><div class="vd" style="left:904px;top:470px;height:14px"></div><div class="vd" style="left:923px;top:470px;height:14px"></div><div class="vd" style="left:942px;top:470px;height:14px"></div><div class="hd" style="left:944px;top:478px;width:8px"></div><div class="vd" style="left:904px;top:484px;height:14px"></div><div class="vd" style="left:923px;top:484px;height:14px"></div><div class="vd" style="left:942px;top:484px;height:14px"></div><div class="hd" style="left:944px;top:492px;width:8px"></div><div class="vd" style="left:904px;top:498px;height:14px"></div><div class="vd" style="left:923px;top:498px;height:14px"></div><div class="vd" style="left:942px;top:498px;height:14px"></div><div class="hd" style="left:944px;top:506px;width:8px"></div><div class="vd" style="left:904px;top:512px;height:14px"></div><div class="vd" style="left:923px;top:512px;height:14px"></div><div class="vd" style="left:942px;top:512px;height:14px"></div><div class="hd" style="left:944px;top:520px;width:8px"></div><div class="vd" style="left:904px;top:526px;height:14px"></div><div class="vd" style="left:923px;top:526px;height:14px"></div><div class="vd" style="left:942px;top:526px;height:9px"></div><div class="hd" style="left:944px;top:534px;width:8px"></div><div class="vd" style="left:904px;top:540px;height:14px"></div><div class="vd" style="left:923px;top:540px;height:14px"></div><div class="hd" style="left:924px;top:548px;width:9px"></div><div class="bx" style="left:919px;top:544px"></div><div class="vd" style="left:904px;top:554px;height:14px"></div><div class="vd" style="left:923px;top:554px;height:14px"></div><div class="vd" style="left:942px;top:554px;height:14px"></div><div class="hd" style="left:944px;top:562px;width:8px"></div><div class="bx p" style="left:938px;top:558px"></div><div class="vd" style="left:904px;top:568px;height:14px"></div><div class="vd" style="left:923px;top:568px;height:14px"></div><div class="vd" style="left:942px;top:568px;height:14px"></div><div class="hd" style="left:944px;top:576px;width:8px"></div><div class="bx p" style="left:938px;top:572px"></div><div class="vd" style="left:904px;top:582px;height:14px"></div><div class="vd" style="left:923px;top:582px;height:14px"></div><div class="vd" style="left:942px;top:582px;height:14px"></div><div class="hd" style="left:944px;top:590px;width:8px"></div><div class="bx p" style="left:938px;top:586px"></div><div class="vd" style="left:904px;top:596px;height:14px"></div><div class="vd" style="left:923px;top:596px;height:14px"></div><div class="vd" style="left:942px;top:596px;height:14px"></div><div class="hd" style="left:944px;top:604px;width:8px"></div><div class="bx p" style="left:938px;top:600px"></div><div class="vd" style="left:904px;top:610px;height:14px"></div><div class="vd" style="left:923px;top:610px;height:14px"></div><div class="vd" style="left:942px;top:610px;height:14px"></div><div class="hd" style="left:944px;top:618px;width:8px"></div><div class="bx p" style="left:938px;top:614px"></div><div class="vd" style="left:904px;top:624px;height:14px"></div><div class="vd" style="left:923px;top:624px;height:14px"></div><div class="vd" style="left:942px;top:624px;height:14px"></div><div class="hd" style="left:944px;top:632px;width:8px"></div><div class="bx p" style="left:938px;top:628px"></div><div class="vd" style="left:904px;top:638px;height:14px"></div><div class="vd" style="left:923px;top:638px;height:14px"></div><div class="vd" style="left:942px;top:638px;height:14px"></div><div class="hd" style="left:944px;top:646px;width:8px"></div><div class="bx p" style="left:938px;top:642px"></div><div class="vd" style="left:904px;top:652px;height:14px"></div><div class="vd" style="left:923px;top:652px;height:14px"></div><div class="vd" style="left:942px;top:652px;height:14px"></div><div class="hd" style="left:944px;top:660px;width:8px"></div><div class="bx p" style="left:938px;top:656px"></div><div class="vd" style="left:904px;top:666px;height:14px"></div><div class="vd" style="left:923px;top:666px;height:14px"></div><div class="vd" style="left:942px;top:666px;height:14px"></div><div class="hd" style="left:944px;top:674px;width:8px"></div><div class="bx p" style="left:938px;top:670px"></div><div class="vd" style="left:904px;top:680px;height:14px"></div><div class="vd" style="left:923px;top:680px;height:14px"></div><div class="vd" style="left:942px;top:680px;height:9px"></div><div class="hd" style="left:944px;top:688px;width:8px"></div><div class="bx p" style="left:938px;top:684px"></div><div class="vd" style="left:904px;top:694px;height:14px"></div><div class="vd" style="left:923px;top:694px;height:14px"></div><div class="hd" style="left:924px;top:702px;width:9px"></div><div class="bx" style="left:919px;top:698px"></div><div class="vd" style="left:904px;top:708px;height:14px"></div><div class="vd" style="left:923px;top:708px;height:14px"></div><div class="vd" style="left:942px;top:708px;height:14px"></div><div class="hd" style="left:944px;top:716px;width:8px"></div><div class="vd" style="left:904px;top:722px;height:14px"></div><div class="vd" style="left:923px;top:722px;height:14px"></div><div class="vd" style="left:942px;top:722px;height:14px"></div><div class="hd" style="left:944px;top:730px;width:8px"></div><div class="vd" style="left:904px;top:736px;height:14px"></div><div class="vd" style="left:923px;top:736px;height:14px"></div><div class="vd" style="left:942px;top:736px;height:14px"></div><div class="hd" style="left:944px;top:744px;width:8px"></div><div class="vd" style="left:904px;top:750px;height:14px"></div><div class="vd" style="left:923px;top:750px;height:14px"></div><div class="vd" style="left:942px;top:750px;height:14px"></div><div class="hd" style="left:944px;top:758px;width:8px"></div><div class="vd" style="left:904px;top:764px;height:14px"></div><div class="vd" style="left:923px;top:764px;height:14px"></div><div class="vd" style="left:942px;top:764px;height:14px"></div><div class="hd" style="left:944px;top:772px;width:8px"></div><div class="vd" style="left:904px;top:778px;height:14px"></div><div class="vd" style="left:923px;top:778px;height:14px"></div><div class="vd" style="left:942px;top:778px;height:14px"></div><div class="hd" style="left:944px;top:786px;width:8px"></div><div class="vd" style="left:904px;top:792px;height:14px"></div><div class="vd" style="left:923px;top:792px;height:14px"></div><div class="vd" style="left:942px;top:792px;height:14px"></div><div class="hd" style="left:944px;top:800px;width:8px"></div><div class="bx p" style="left:938px;top:796px"></div><div class="vd" style="left:904px;top:806px;height:14px"></div><div class="vd" style="left:923px;top:806px;height:14px"></div><div class="vd" style="left:942px;top:806px;height:14px"></div><div class="hd" style="left:944px;top:814px;width:8px"></div><div class="bx p" style="left:938px;top:810px"></div><div class="vd" style="left:904px;top:820px;height:14px"></div><div class="vd" style="left:923px;top:820px;height:14px"></div><div class="vd" style="left:942px;top:820px;height:9px"></div><div class="hd" style="left:944px;top:828px;width:8px"></div><div class="bx p" style="left:938px;top:824px"></div><div class="vd" style="left:904px;top:834px;height:14px"></div><div class="vd" style="left:923px;top:834px;height:14px"></div><div class="hd" style="left:924px;top:842px;width:9px"></div><div class="vd" style="left:904px;top:848px;height:14px"></div><div class="vd" style="left:923px;top:848px;height:14px"></div><div class="hd" style="left:924px;top:856px;width:9px"></div><div class="bx" style="left:919px;top:852px"></div><div class="vd" style="left:904px;top:862px;height:14px"></div><div class="vd" style="left:923px;top:862px;height:14px"></div><div class="vd" style="left:942px;top:862px;height:14px"></div><div class="hd" style="left:944px;top:870px;width:8px"></div><div class="vd" style="left:904px;top:876px;height:14px"></div><div class="vd" style="left:923px;top:876px;height:14px"></div><div class="vd" style="left:942px;top:876px;height:14px"></div><div class="hd" style="left:944px;top:884px;width:8px"></div><div class="bx p" style="left:938px;top:880px"></div><div class="vd" style="left:904px;top:890px;height:14px"></div><div class="vd" style="left:923px;top:890px;height:14px"></div><div class="vd" style="left:942px;top:890px;height:14px"></div><div class="hd" style="left:944px;top:898px;width:8px"></div><div class="bx p" style="left:938px;top:894px"></div><div class="vd" style="left:904px;top:904px;height:14px"></div><div class="vd" style="left:923px;top:904px;height:14px"></div><div class="vd" style="left:942px;top:904px;height:14px"></div><div class="hd" style="left:944px;top:912px;width:8px"></div><div class="bx p" style="left:938px;top:908px"></div><div class="vd" style="left:904px;top:918px;height:14px"></div><div class="vd" style="left:923px;top:918px;height:14px"></div><div class="vd" style="left:942px;top:918px;height:9px"></div><div class="hd" style="left:944px;top:926px;width:8px"></div><div class="bx p" style="left:938px;top:922px"></div><div class="vd" style="left:904px;top:932px;height:14px"></div><div class="vd" style="left:923px;top:932px;height:9px"></div><div class="hd" style="left:924px;top:940px;width:9px"></div><div class="bx" style="left:919px;top:936px"></div><div class="vd" style="left:904px;top:946px;height:14px"></div><div class="vd" style="left:942px;top:946px;height:14px"></div><div class="hd" style="left:944px;top:954px;width:8px"></div><div class="vd" style="left:904px;top:960px;height:14px"></div><div class="vd" style="left:942px;top:960px;height:14px"></div><div class="hd" style="left:944px;top:968px;width:8px"></div><div class="bx p" style="left:938px;top:964px"></div><div class="vd" style="left:904px;top:974px;height:14px"></div><div class="vd" style="left:942px;top:974px;height:14px"></div><div class="hd" style="left:944px;top:982px;width:8px"></div><div class="bx p" style="left:938px;top:978px"></div><div class="vd" style="left:904px;top:988px;height:14px"></div><div class="vd" style="left:942px;top:988px;height:9px"></div><div class="hd" style="left:944px;top:996px;width:8px"></div><div class="cb" style="left:952px;top:92px"></div><svg style="left:952px;top:92px" width="13" height="13"><use href="#i-chk"/></svg><div class="rt" style="left:965px;top:92px">货物装柜</div><div class="cb" style="left:952px;top:106px"></div><svg style="left:952px;top:106px" width="13" height="13"><use href="#i-chk"/></svg><div class="rt" style="left:965px;top:106px">货物报关</div><div class="cb" style="left:952px;top:120px"></div><svg style="left:952px;top:120px" width="13" height="13"><use href="#i-chk"/></svg><div class="rt" style="left:965px;top:120px">货物清关</div><div class="cb" style="left:952px;top:134px"></div><svg style="left:952px;top:134px" width="13" height="13"><use href="#i-chk"/></svg><div class="rt" style="left:965px;top:134px">中转提货</div><div class="cb" style="left:952px;top:148px"></div><svg style="left:952px;top:148px" width="13" height="13"><use href="#i-chk"/></svg><div class="rt" style="left:965px;top:148px">货物中转</div><div class="cb" style="left:952px;top:162px"></div><svg style="left:952px;top:162px" width="13" height="13"><use href="#i-chk"/></svg><div class="rt" style="left:965px;top:162px">目的地卸货</div><div class="cb" style="left:952px;top:176px"></div><svg style="left:952px;top:176px" width="13" height="13"><use href="#i-chk"/></svg><div class="rt" style="left:965px;top:176px">到货库存</div><div class="cb" style="left:952px;top:190px"></div><svg style="left:952px;top:190px" width="13" height="13"><use href="#i-chk"/></svg><div class="rt" style="left:965px;top:190px">到货确认</div><div class="cb" style="left:952px;top:204px"></div><svg style="left:952px;top:204px" width="13" height="13"><use href="#i-chk"/></svg><div class="rt" style="left:965px;top:204px">到货通知</div><div class="cb" style="left:952px;top:218px"></div><svg style="left:952px;top:218px" width="13" height="13"><use href="#i-chk"/></svg><div class="rt" style="left:965px;top:218px">送货上门</div><div class="cb" style="left:952px;top:232px"></div><svg style="left:952px;top:232px" width="13" height="13"><use href="#i-chk"/></svg><div class="rt" style="left:965px;top:232px">自提签收</div><div class="cb" style="left:952px;top:246px"></div><svg style="left:952px;top:246px" width="13" height="13"><use href="#i-chk"/></svg><div class="rt" style="left:965px;top:246px">回单签收</div><div class="cb" style="left:933px;top:260px"></div><svg style="left:933px;top:260px" width="13" height="13"><use href="#i-chk"/></svg><div class="rt" style="left:946px;top:260px">数据字典</div><div class="cb" style="left:952px;top:274px"></div><svg style="left:952px;top:274px" width="13" height="13"><use href="#i-chk"/></svg><div class="rt" style="left:965px;top:274px">编辑发货单业务类型</div><div class="cb" style="left:952px;top:288px"></div><svg style="left:952px;top:288px" width="13" height="13"><use href="#i-chk"/></svg><div class="rt" style="left:965px;top:288px">车辆信息管理</div><div class="cb" style="left:933px;top:302px"></div><svg style="left:933px;top:302px" width="13" height="13"><use href="#i-chk"/></svg><div class="rt" style="left:946px;top:302px">顶部菜单</div><div class="cb" style="left:952px;top:316px"></div><svg style="left:952px;top:316px" width="13" height="13"><use href="#i-chk"/></svg><div class="rt" style="left:965px;top:316px">工具<span class="m">(&amp;T)</span></div><div class="cb" style="left:952px;top:330px"></div><svg style="left:952px;top:330px" width="13" height="13"><use href="#i-chk"/></svg><div class="rt" style="left:965px;top:330px">系统设置<span class="m">(&amp;S)</span></div><div class="cb" style="left:952px;top:344px"></div><svg style="left:952px;top:344px" width="13" height="13"><use href="#i-chk"/></svg><div class="rt" style="left:965px;top:344px">帮助<span class="m">(&amp;H)</span></div><div class="cb" style="left:933px;top:358px"></div><svg style="left:933px;top:358px" width="13" height="13"><use href="#i-chk"/></svg><div class="rt" style="left:946px;top:358px"><span class="m">Operate Views</span></div><div class="cb" style="left:933px;top:372px"></div><svg style="left:933px;top:372px" width="13" height="13"><use href="#i-chk"/></svg><div class="rt" style="left:946px;top:372px">发货报表</div><div class="cb" style="left:952px;top:386px"></div><svg style="left:952px;top:386px" width="13" height="13"><use href="#i-chk"/></svg><div class="rt" style="left:965px;top:386px">应收应付结余表</div><div class="cb" style="left:952px;top:400px"></div><svg style="left:952px;top:400px" width="13" height="13"><use href="#i-chk"/></svg><div class="rt" style="left:965px;top:400px">业务发货报表</div><div class="cb" style="left:952px;top:414px"></div><svg style="left:952px;top:414px" width="13" height="13"><use href="#i-chk"/></svg><div class="rt" style="left:965px;top:414px">客户应收费用分析表</div><div class="cb" style="left:952px;top:428px"></div><svg style="left:952px;top:428px" width="13" height="13"><use href="#i-chk"/></svg><div class="rt" style="left:965px;top:428px">客户未收款对账单</div><div class="cb" style="left:952px;top:442px"></div><svg style="left:952px;top:442px" width="13" height="13"><use href="#i-chk"/></svg><div class="rt" style="left:965px;top:442px">客户发货报表</div><div class="cb" style="left:952px;top:456px"></div><svg style="left:952px;top:456px" width="13" height="13"><use href="#i-chk"/></svg><div class="rt" style="left:965px;top:456px">寄货人费用清单</div><div class="cb" style="left:952px;top:470px"></div><svg style="left:952px;top:470px" width="13" height="13"><use href="#i-chk"/></svg><div class="rt" style="left:965px;top:470px">公司发货报表</div><div class="cb" style="left:952px;top:484px"></div><svg style="left:952px;top:484px" width="13" height="13"><use href="#i-chk"/></svg><div class="rt" style="left:965px;top:484px">发货单单票利润<span class="m">(</span>分摊<span class="m">)</span></div><div class="cb" style="left:952px;top:498px"></div><svg style="left:952px;top:498px" width="13" height="13"><use href="#i-chk"/></svg><div class="rt" style="left:965px;top:498px">发货单单票利润<span class="m">(</span>单票核算<span class="m">)</span></div><div class="cb" style="left:952px;top:512px"></div><svg style="left:952px;top:512px" width="13" height="13"><use href="#i-chk"/></svg><div class="rt" style="left:965px;top:512px">查看总发货量</div><div class="cb" style="left:952px;top:526px"></div><svg style="left:952px;top:526px" width="13" height="13"><use href="#i-chk"/></svg><div class="rt" style="left:965px;top:526px">查看所有人</div><div class="cb" style="left:933px;top:540px"></div><svg style="left:933px;top:540px" width="13" height="13"><use href="#i-chk"/></svg><div class="rt" style="left:946px;top:540px">左侧菜单</div><div class="cb" style="left:952px;top:554px"></div><svg style="left:952px;top:554px" width="13" height="13"><use href="#i-chk"/></svg><div class="rt" style="left:965px;top:554px">发货管理</div><div class="cb" style="left:952px;top:568px"></div><svg style="left:952px;top:568px" width="13" height="13"><use href="#i-chk"/></svg><div class="rt" style="left:965px;top:568px">财务管理</div><div class="cb" style="left:952px;top:582px"></div><svg style="left:952px;top:582px" width="13" height="13"><use href="#i-chk"/></svg><div class="rt" style="left:965px;top:582px">出纳管理</div><div class="cb" style="left:952px;top:596px"></div><svg style="left:952px;top:596px" width="13" height="13"><use href="#i-chk"/></svg><div class="rt" style="left:965px;top:596px">客户管理</div><div class="cb" style="left:952px;top:610px"></div><svg style="left:952px;top:610px" width="13" height="13"><use href="#i-chk"/></svg><div class="rt" style="left:965px;top:610px">供销管理</div><div class="cb" style="left:952px;top:624px"></div><svg style="left:952px;top:624px" width="13" height="13"><use href="#i-chk"/></svg><div class="rt" style="left:965px;top:624px">人事管理</div><div class="cb" style="left:952px;top:638px"></div><svg style="left:952px;top:638px" width="13" height="13"><use href="#i-chk"/></svg><div class="rt" style="left:965px;top:638px">系统配置</div><div class="cb" style="left:952px;top:652px"></div><svg style="left:952px;top:652px" width="13" height="13"><use href="#i-chk"/></svg><div class="rt" style="left:965px;top:652px">系统维护</div><div class="cb" style="left:952px;top:666px"></div><svg style="left:952px;top:666px" width="13" height="13"><use href="#i-chk"/></svg><div class="rt" style="left:965px;top:666px">我的工作台</div><div class="cb" style="left:952px;top:680px"></div><svg style="left:952px;top:680px" width="13" height="13"><use href="#i-chk"/></svg><div class="rt" style="left:965px;top:680px">资金管理</div><div class="cb" style="left:933px;top:694px"></div><svg style="left:933px;top:694px" width="13" height="13"><use href="#i-chk"/></svg><div class="rt" style="left:946px;top:694px">系统开单</div><div class="cb" style="left:952px;top:708px"></div><svg style="left:952px;top:708px" width="13" height="13"><use href="#i-chk"/></svg><div class="rt" style="left:965px;top:708px">添加</div><div class="cb" style="left:952px;top:722px"></div><svg style="left:952px;top:722px" width="13" height="13"><use href="#i-chk"/></svg><div class="rt" style="left:965px;top:722px">查看联系方式</div><div class="cb" style="left:952px;top:736px"></div><svg style="left:952px;top:736px" width="13" height="13"><use href="#i-chk"/></svg><div class="rt" style="left:965px;top:736px">录入发货收货信息</div><div class="cb" style="left:952px;top:750px"></div><svg style="left:952px;top:750px" width="13" height="13"><use href="#i-chk"/></svg><div class="rt" style="left:965px;top:750px">编辑</div><div class="cb" style="left:952px;top:764px"></div><svg style="left:952px;top:764px" width="13" height="13"><use href="#i-chk"/></svg><div class="rt" style="left:965px;top:764px">删除</div><div class="cb" style="left:952px;top:778px"></div><svg style="left:952px;top:778px" width="13" height="13"><use href="#i-chk"/></svg><div class="rt" style="left:965px;top:778px">查看其它人</div><div class="cb" style="left:952px;top:792px"></div><svg style="left:952px;top:792px" width="13" height="13"><use href="#i-chk"/></svg><div class="rt" style="left:965px;top:792px">财务相关</div><div class="cb" style="left:952px;top:806px"></div><svg style="left:952px;top:806px" width="13" height="13"><use href="#i-chk"/></svg><div class="rt" style="left:965px;top:806px">辅助管理</div><div class="cb" style="left:952px;top:820px"></div><svg style="left:952px;top:820px" width="13" height="13"><use href="#i-chk"/></svg><div class="rt" style="left:965px;top:820px">发货单编辑底部选项卡</div><div class="cb" style="left:933px;top:834px"></div><svg style="left:933px;top:834px" width="13" height="13"><use href="#i-chk"/></svg><div class="rt" style="left:946px;top:834px">提单预配</div><div class="cb" style="left:933px;top:848px"></div><svg style="left:933px;top:848px" width="13" height="13"><use href="#i-chk"/></svg><div class="rt" style="left:946px;top:848px"><span class="m">Web</span>用户</div><div class="cb" style="left:952px;top:862px"></div><svg style="left:952px;top:862px" width="13" height="13"><use href="#i-chk"/></svg><div class="rt" style="left:965px;top:862px">首页</div><div class="cb" style="left:952px;top:876px"></div><svg style="left:952px;top:876px" width="13" height="13"><use href="#i-chk"/></svg><div class="rt" style="left:965px;top:876px">委托预报</div><div class="cb" style="left:952px;top:890px"></div><svg style="left:952px;top:890px" width="13" height="13"><use href="#i-chk"/></svg><div class="rt" style="left:965px;top:890px">财务中心</div><div class="cb" style="left:952px;top:904px"></div><svg style="left:952px;top:904px" width="13" height="13"><use href="#i-chk"/></svg><div class="rt" style="left:965px;top:904px">配载管理</div><div class="cb" style="left:952px;top:918px"></div><svg style="left:952px;top:918px" width="13" height="13"><use href="#i-chk"/></svg><div class="rt" style="left:965px;top:918px">个人中心</div><div class="cb" style="left:933px;top:932px"></div><svg style="left:933px;top:932px" width="13" height="13"><use href="#i-chk"/></svg><div class="rt" style="left:946px;top:932px"><span class="m">Web</span>客户</div><div class="cb" style="left:952px;top:946px"></div><svg style="left:952px;top:946px" width="13" height="13"><use href="#i-chk"/></svg><div class="rt" style="left:965px;top:946px">首页</div><div class="cb" style="left:952px;top:960px"></div><svg style="left:952px;top:960px" width="13" height="13"><use href="#i-chk"/></svg><div class="rt" style="left:965px;top:960px">订单管理</div><div class="cb" style="left:952px;top:974px"></div><svg style="left:952px;top:974px" width="13" height="13"><use href="#i-chk"/></svg><div class="rt" style="left:965px;top:974px">财务管理</div><div class="cb" style="left:952px;top:988px"></div><svg style="left:952px;top:988px" width="13" height="13"><use href="#i-chk"/></svg><div class="rt" style="left:965px;top:988px">库存管理</div></div></div><div class="a" style="left:1898px;top:91px;width:10px;height:914px;background:#f0f0f0"></div><div class="a" style="left:1898px;top:183px;width:10px;height:805px;background:#cdcdcd"></div><svg style="left:1898px;top:91px" width="10" height="914"><path d="M2.5 12 L5.5 9 L8.5 12" fill="none" stroke="#606060" stroke-width="2"/><path d="M2.5 903 L5.5 906 L8.5 903" fill="none" stroke="#606060" stroke-width="2"/></svg><svg style="left:1745px;top:1003px" width="30" height="6"><path d="M0 6 L20 1.5 L22 6 Z" fill="#f06a30"/></svg></body></html>
